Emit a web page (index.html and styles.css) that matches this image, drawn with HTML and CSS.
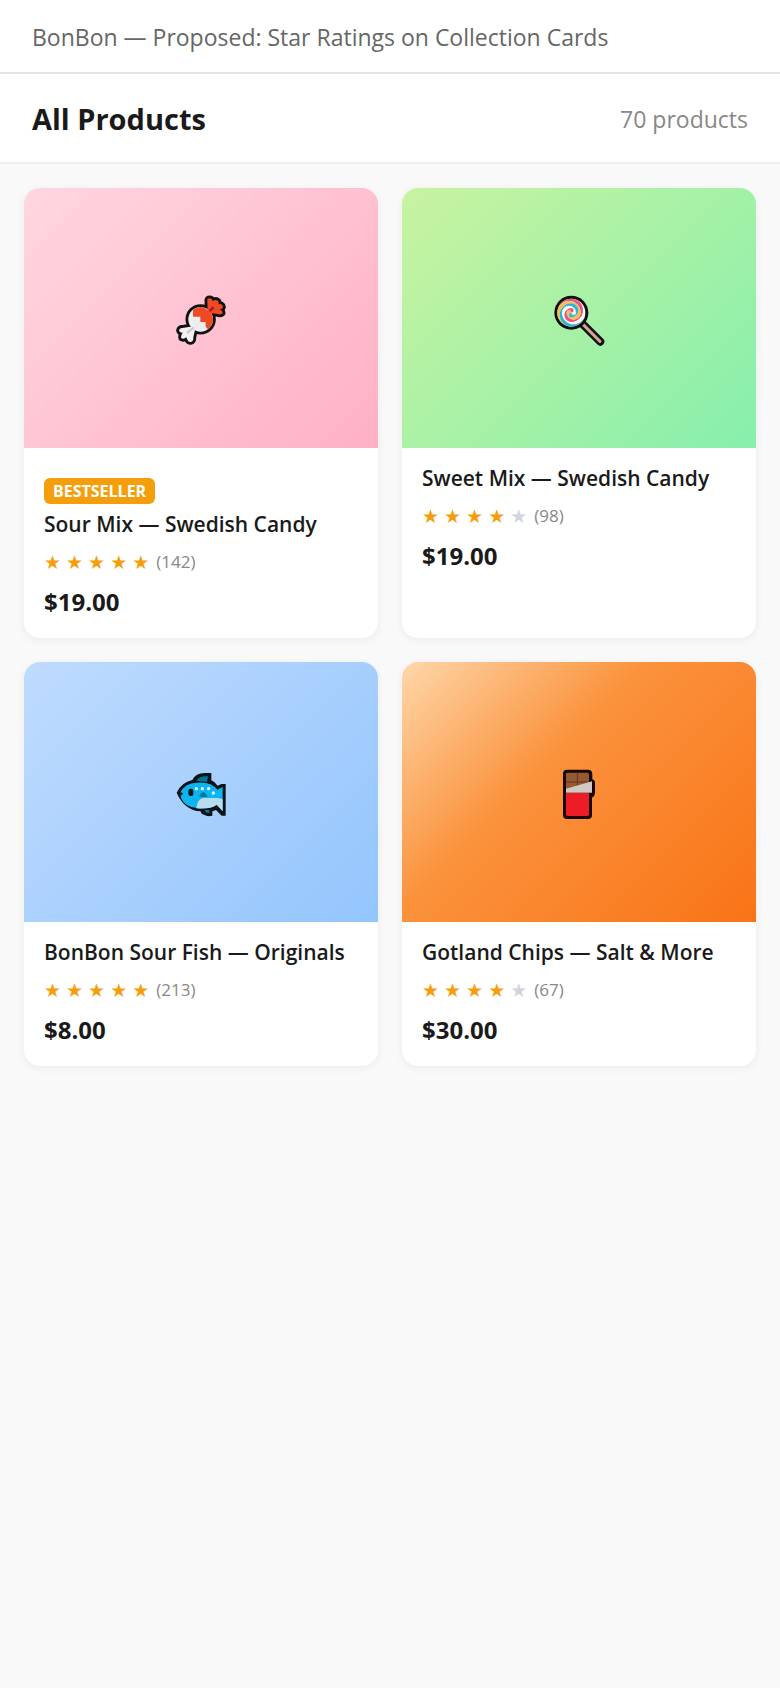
FILE: index.html
```html
<!DOCTYPE html>
<html lang="en">
<head>
  <meta charset="UTF-8">
  <meta name="viewport" content="width=device-width, initial-scale=1.0">
  <title>BonBon - All Products</title>
  <link rel="stylesheet" href="styles.css">
</head>
<body>
  <div class="topbar">BonBon — Proposed: Star Ratings on Collection Cards</div>

  <header class="page-header">
    <h1>All Products</h1>
    <span class="total">70 products</span>
  </header>

  <main class="grid">
    <article class="card">
      <div class="card-img sour">
        <svg class="emoji" viewBox="3 -6 210 210" aria-hidden="true">
          <g stroke="#111" stroke-width="17" stroke-linejoin="round" fill="#111">
            <circle cx="107" cy="103" r="37"/>
            <path d="M128 78L127 47Q126 40 134 40Q141 40 144 49Q149 42 159 47Q163 53 160 58Q172 55 174 66Q170 75 162 72Q173 76 173 85Q168 90 159 87L134 84Z"/>
            <path d="M86 124L57 128Q43 128 42 136Q43 145 54 143Q46 151 49 160Q57 164 64 157Q68 172 77 171Q86 170 85 157L90 134Z"/>
          </g>
          <circle cx="107" cy="103" r="37" fill="#eee"/>
          <path d="M84 75Q98 63 115 67L134 79Q147 96 143 112Q139 126 129 133L122 125V111H106V95H84Z" fill="#f04a24"/>
          <path d="M128 78L127 47Q126 40 134 40Q141 40 144 49Q149 42 159 47Q163 53 160 58Q172 55 174 66Q170 75 162 72Q173 76 173 85Q168 90 159 87L134 84Z" fill="#f04a24"/>
          <path d="M86 124L57 128Q43 128 42 136Q43 145 54 143Q46 151 49 160Q57 164 64 157Q68 172 77 171Q86 170 85 157L90 134Z" fill="#f2f2f2"/>
          <path d="M134 78L146 67" stroke="#b5182a" stroke-width="8"/>
          <path d="M66 144L86 127" stroke="#ccc" stroke-width="7"/>
        </svg>
      </div>
      <div class="card-body">
        <span class="badge">BESTSELLER</span>
        <h2>Sour Mix — Swedish Candy</h2>
        <div class="rating">
          <span>★</span><span>★</span><span>★</span><span>★</span><span>★</span>
          <small>(142)</small>
        </div>
        <p class="price">$19.00</p>
      </div>
    </article>

    <article class="card">
      <div class="card-img sweet">
        <svg class="emoji" viewBox="-3 -6 210 210" aria-hidden="true">
          <path d="M108 112L166 170" stroke="#111" stroke-width="24" stroke-linecap="round"/>
          <path d="M108 112L165 169" stroke="#d5a58d" stroke-width="9" stroke-linecap="round"/>
          <circle cx="79" cy="83" r="51" fill="#111"/>
          <g transform="translate(79 83)">
            <circle r="42" fill="#fff"/>
            <path id="arm" d="M-42 0A35 35 0 0 1 28 0A21 21 0 0 1 -14 0A7 7 0 0 1 0 0A7 7 0 0 0 0 -14A21 21 0 0 0 0 28A35 35 0 0 0 0 -42A42 42 0 0 0 -42 0Z" fill="#e8568a"/>
            <path transform="rotate(-90)" d="M-42 0A35 35 0 0 1 28 0A21 21 0 0 1 -14 0A7 7 0 0 1 0 0A7 7 0 0 0 0 -14A21 21 0 0 0 0 28A35 35 0 0 0 0 -42A42 42 0 0 0 -42 0Z" fill="#f6c04a"/>
            <path transform="rotate(180)" d="M-42 0A35 35 0 0 1 28 0A21 21 0 0 1 -14 0A7 7 0 0 1 0 0A7 7 0 0 0 0 -14A21 21 0 0 0 0 28A35 35 0 0 0 0 -42A42 42 0 0 0 -42 0Z" fill="#2fb4d3"/>
          </g>
        </svg>
      </div>
      <div class="card-body">
        <h2>Sweet Mix — Swedish Candy</h2>
        <div class="rating">
          <span>★</span><span>★</span><span>★</span><span>★</span><span class="empty">★</span>
          <small>(98)</small>
        </div>
        <p class="price">$19.00</p>
      </div>
    </article>

    <article class="card">
      <div class="card-img fish">
        <svg class="emoji" viewBox="3 -9 210 210" aria-hidden="true">
          <path d="M35 98Q49 67 82 60Q92 39 119 39H139V61Q151 66 158 77L169 72H182V167H170L153 150Q147 153 142 154V167Q127 171 117 164Q108 163 107 154Q58 151 35 98Z" fill="#0c1318"/>
          <path d="M94 62Q104 47 129 49L126 66Z" fill="#007899"/>
          <path d="M46 98Q59 69 95 68Q137 63 157 89L173 81V154L155 134Q137 148 99 145Q58 141 48 113Z" fill="#0bb5f1"/>
          <path d="M94 145Q96 119 113 114H160L173 118V154L155 134Q137 148 94 145Z" fill="#b9dcef"/>
          <path d="M102 111Q106 99 114 96Q122 98 128 111Z" fill="#007899"/>
          <path d="M44 96L55 100L48 107Z" fill="#10151a"/>
          <rect x="70" y="86" width="15" height="22" rx="7" fill="#10151a"/>
          <g fill="#e5f8ff"><circle cx="94" cy="86" r="5"/><circle cx="112" cy="86" r="5"/><circle cx="131" cy="86" r="5"/><circle cx="145" cy="99" r="5"/></g>
          <path d="M118 151L132 149L134 158H125Z" fill="#007899"/>
        </svg>
      </div>
      <div class="card-body">
        <h2>BonBon Sour Fish — Originals</h2>
        <div class="rating">
          <span>★</span><span>★</span><span>★</span><span>★</span><span>★</span>
          <small>(213)</small>
        </div>
        <p class="price">$8.00</p>
      </div>
    </article>

    <article class="card">
      <div class="card-img chips">
        <svg class="emoji" viewBox="-3 -9 210 210" aria-hidden="true">
          <path d="M66 29H129Q141 29 142 41V58Q150 60 150 70V99Q150 108 141 113V165Q141 177 129 177H66Q54 177 54 165V41Q54 29 66 29Z" fill="#170605"/>
          <path d="M63 42Q63 38 68 38H127Q132 38 132 43V75L63 94Z" fill="#955a32"/>
          <path d="M97 38V80M63 66H132" stroke="#63351f" stroke-width="3"/>
          <path d="M63 86L141 64V98H63Z" fill="#cfc9c2"/>
          <path d="M63 99H132V163Q132 168 127 168H68Q63 168 63 163Z" fill="#ed1c27"/>
        </svg>
      </div>
      <div class="card-body">
        <h2>Gotland Chips — Salt &amp; More</h2>
        <div class="rating">
          <span>★</span><span>★</span><span>★</span><span>★</span><span class="empty">★</span>
          <small>(67)</small>
        </div>
        <p class="price">$30.00</p>
      </div>
    </article>
  </main>
</body>
</html>
```
FILE: styles.css
```css
* {
  box-sizing: border-box;
  margin: 0;
  padding: 0;
}
body {
  font-family: 'Segoe UI', 'Open Sans', 'Noto Sans', sans-serif;
  background: #f9f9f9;
  color: #1a1a1a;
}
.topbar {
  background: #fff;
  border-bottom: 2px solid #e5e5e5;
  padding: 21px 32px 19px;
  font-size: 23px;
  line-height: 32px;
  color: #666;
}
.page-header {
  display: flex;
  justify-content: space-between;
  align-items: center;
  background: #fff;
  border-bottom: 2px solid #eee;
  padding: 25px 32px 23px;
}
h1 {
  font-size: 29px;
  line-height: 40px;
  font-weight: 700;
}
.total {
  font-size: 23px;
  line-height: 32px;
  color: #888;
}
.grid {
  display: grid;
  grid-template-columns: 1fr 1fr;
  gap: 24px;
  padding: 24px;
}
.card {
  background: #fff;
  border-radius: 16px;
  overflow: hidden;
  box-shadow: 0 2px 8px rgba(0,0,0,0.06);
}
.card-img {
  height: 260px;
  display: flex;
  align-items: center;
  justify-content: center;
}
.sour {
  background: linear-gradient(135deg, #ffd6e0, #ffb0c5);
}
.sweet {
  background: linear-gradient(135deg, #c8f3a0, #86efac);
}
.fish {
  background: linear-gradient(135deg, #bfdbfe, #93c5fd);
}
.chips {
  background: linear-gradient(135deg, #fed7aa, #fb923c 40%, #f97316);
}
.emoji {
  width: 70px;
  height: 70px;
}
.card-body {
  padding: 14px 20px 20px;
}
.badge {
  display: block;
  width: fit-content;
  margin: 16px 0 4px;
  padding: 0 9px;
  background: #f59e0b;
  color: #fff;
  border-radius: 6px;
  font-size: 16px;
  line-height: 26px;
  font-weight: 700;
}
h2 {
  font-size: 21px;
  line-height: 32px;
  font-weight: 600;
}
.rating {
  display: flex;
  align-items: center;
  gap: 5px;
  margin-top: 10px;
  font-size: 19px;
  line-height: 24px;
  color: #f59e0b;
}
.rating span {
  font-family: 'DejaVu Sans', sans-serif;
}
.rating .empty {
  color: #d1d5db;
}
.rating small {
  margin-left: 2px;
  font-size: 17px;
  color: #888;
}
.price {
  margin-top: 12px;
  font-size: 24px;
  line-height: 32px;
  font-weight: 700;
}
```
